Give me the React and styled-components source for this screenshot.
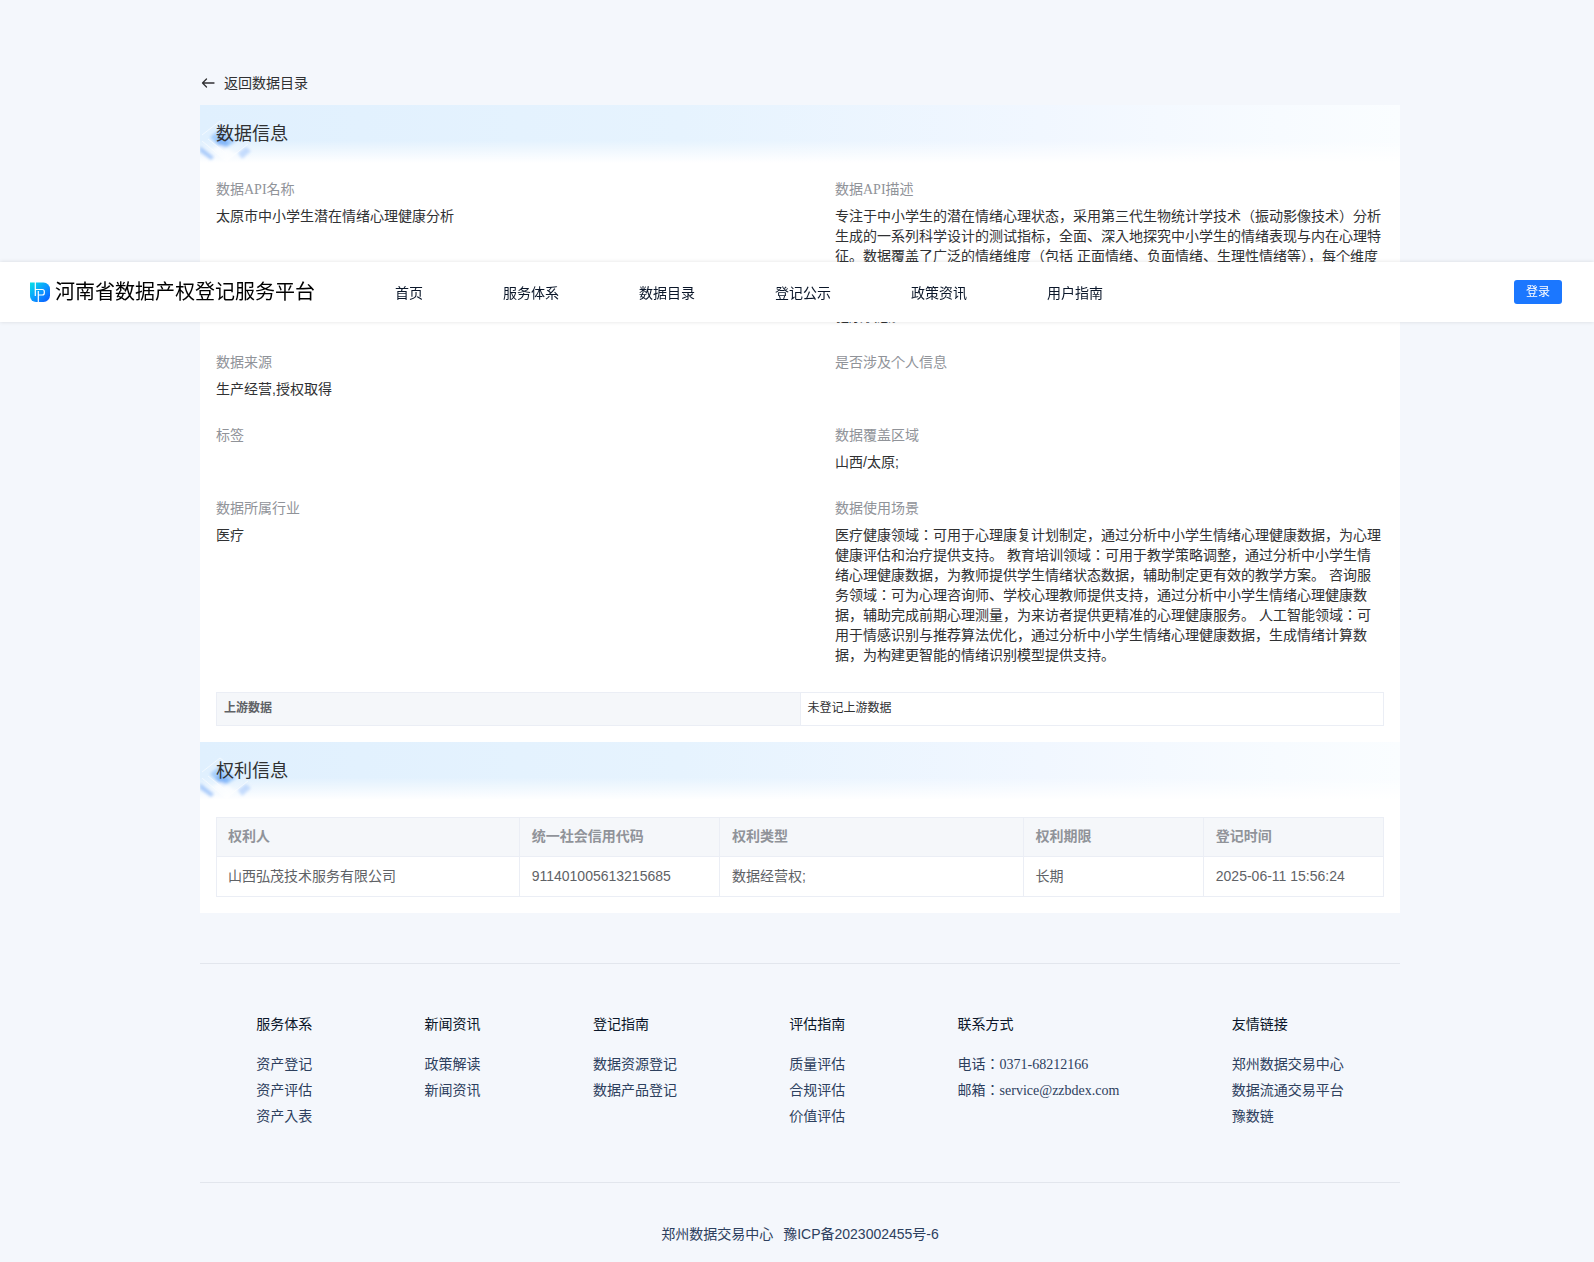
import { useState } from 'react';
import styled, { createGlobalStyle } from 'styled-components'

const sans = `'Liberation Sans', 'Noto Sans CJK JP', sans-serif`
const serif = `'Liberation Serif', 'Noto Sans CJK JP', serif`

const GlobalStyle = createGlobalStyle`
  * {
    box-sizing: border-box;
  }
  body {
    margin: 0;
    background-color: #f4f7fc;
    font-family: ${sans};
    font-size: 14px;
    line-height: 20px;
    color: #303133;
  }
  a {
    color: inherit;
    text-decoration: none;
  }
`;

const Header = styled.header`
  position: fixed;
  top: 262px;
  left: 0;
  right: 0;
  z-index: 10;
  display: flex;
  align-items: center;
  height: 60px;
  padding: 0 32px 0 30px;
  background-color: white;
  box-shadow: 0 0 4px rgba(0, 0, 0, 0.12);
`;

const Brand = styled.a`
  display: flex;
  align-items: center;
  gap: 5px;
  font-size: 20px;
  line-height: 30px;
  color: black;
  > svg {
    display: block;
    width: 20px;
    height: 20px;
  }
`;

const Nav = styled.nav`
  display: flex;
  flex: 1;
  gap: 80px;
  padding: 2px 0 0 80px;
  color: #0a1629;
`;

const LoginButton = styled.button`
  height: 24px;
  padding: 0 12px;
  border: none;
  border-radius: 3px;
  background-color: #1b77ff;
  color: white;
  font-family: ${sans};
  font-size: 12px;
  line-height: 24px;
  cursor: pointer;
`;

const Page = styled.div`
  padding: 73px 0 0 6px;
`;

const Container = styled.div`
  max-width: 1200px;
  margin: 0 auto;
`;

const BackLink = styled.a`
  display: inline-flex;
  align-items: center;
  gap: 8px;
  margin-bottom: 12px;
  vertical-align: top;
  > svg {
    width: 16px;
    height: 16px;
  }
`;

const Card = styled.section`
  background-color: white;
`;

const Banner = styled.div`
  position: relative;
  padding: 16px;
  background: linear-gradient(to bottom, rgba(255, 255, 255, 0) 60%, white 98%),
    linear-gradient(to right, #e0f0fe, #e6f3fe 40%, #f1f7ff 70%, #fafdff);
  > svg {
    position: absolute;
    left: 0;
    top: 0;
    width: 60px;
    height: 59px;
  }
  > h2 {
    position: relative;
    margin: 0;
    font-size: 18px;
    font-weight: normal;
    line-height: 27px;
  }
`;

const CardBody = styled.div`
  padding: 16px;
`;

const InfoGrid = styled.dl`
  display: grid;
  grid-template-columns: 1fr 1fr;
  gap: 27px 70px;
  margin: 0 0 27px;
  > div > dt {
    font-family: ${serif};
    color: #909399;
  }
  > div > dd {
    margin: 6px 0 0;
  }
`;

const UpstreamTable = styled.table`
  width: 100%;
  table-layout: fixed;
  border-collapse: collapse;
  font-size: 12px;
  line-height: 18px;
  th, td {
    padding: 6px 7px 8px;
    border: 1px solid #ebeef5;
    text-align: left;
  }
  th {
    background-color: #f5f7fa;
    color: #606266;
  }
`;

const RightsTable = styled.table`
  width: 100%;
  table-layout: fixed;
  border-collapse: separate;
  border-spacing: 0;
  line-height: 23px;
  th, td {
    padding: 8px 12px;
    border: 0 solid #ebeef5;
    border-width: 0 1px 1px 0;
    text-align: left;
    color: #606266;
  }
  th {
    padding-top: 7px;
    border-top-width: 1px;
    background-color: #f5f7fa;
    color: #909399;
  }
  th:first-child, td:first-child {
    padding-left: 11px;
    border-left-width: 1px;
  }
`;

const FooterLinks = styled.div`
  display: flex;
  justify-content: space-around;
  margin-top: 50px;
  padding: 51px 0 55px;
  border-top: 1px solid #e2e6ed;
  border-bottom: 1px solid #e2e6ed;
`;

const FooterColumn = styled.div`
  font-family: ${serif};
  color: #2d405e;
  > h3 {
    margin: 0 0 20px;
    font-size: 14px;
    font-weight: normal;
    color: #0a1629;
  }
  > ul {
    display: grid;
    gap: 6px;
    margin: 0;
    padding: 0;
    list-style: none;
  }
`;

const Copyright = styled.div`
  display: flex;
  justify-content: center;
  gap: 10px;
  padding: 41px 0 20px;
  color: #2d405e;
`;

const navItems = ['首页', '服务体系', '数据目录', '登记公示', '政策资讯', '用户指南']

const infoItems = [
  { label: '数据API名称', value: '太原市中小学生潜在情绪心理健康分析' },
  {
    label: '数据API描述',
    value: '专注于中小学生的潜在情绪心理状态，采用第三代生物统计学技术（振动影像技术）分析生成的一系列科学设计的测试指标，全面、深入地探究中小学生的情绪表现与内在心理特征。数据覆盖了广泛的情绪维度（包括 正面情绪、负面情绪、生理性情绪等），每个维度都通过精确的指标进行量化，能够客观反映中小学生当前的情绪状态与心理健康水平，为学校、家庭及专业机构及时了解学生心理变化、开展针对性的心理辅导与干预提供依据和健康状态。'
  },
  { label: '数据来源', value: '生产经营,授权取得' },
  { label: '是否涉及个人信息', value: '' },
  { label: '标签', value: '' },
  { label: '数据覆盖区域', value: '山西/太原;' },
  { label: '数据所属行业', value: '医疗' },
  {
    label: '数据使用场景',
    value: '医疗健康领域：可用于心理康复计划制定，通过分析中小学生情绪心理健康数据，为心理健康评估和治疗提供支持。 教育培训领域：可用于教学策略调整，通过分析中小学生情绪心理健康数据，为教师提供学生情绪状态数据，辅助制定更有效的教学方案。 咨询服务领域：可为心理咨询师、学校心理教师提供支持，通过分析中小学生情绪心理健康数据，辅助完成前期心理测量，为来访者提供更精准的心理健康服务。 人工智能领域：可用于情感识别与推荐算法优化，通过分析中小学生情绪心理健康数据，生成情绪计算数据，为构建更智能的情绪识别模型提供支持。'
  }
]

const rightsColumns = [
  { key: 'owner', title: '权利人', width: '26%' },
  { key: 'code', title: '统一社会信用代码', width: '200px' },
  { key: 'type', title: '权利类型', width: '26%' },
  { key: 'term', title: '权利期限', width: '180px' },
  { key: 'time', title: '登记时间', width: '180px' }
]

const rights = [
  {
    owner: '山西弘茂技术服务有限公司',
    code: '911401005613215685',
    type: '数据经营权;',
    term: '长期',
    time: '2025-06-11 15:56:24'
  }
]

const footerColumns = [
  { title: '服务体系', links: ['资产登记', '资产评估', '资产入表'] },
  { title: '新闻资讯', links: ['政策解读', '新闻资讯'] },
  { title: '登记指南', links: ['数据资源登记', '数据产品登记'] },
  { title: '评估指南', links: ['质量评估', '合规评估', '价值评估'] },
  { title: '联系方式', texts: ['电话：0371-68212166', '邮箱：service@zzbdex.com'] },
  { title: '友情链接', links: ['郑州数据交易中心', '数据流通交易平台', '豫数链'] }
]

function Logo () {
  return (
    <svg viewBox='0 0 20 20' aria-hidden='true'>
      <defs>
        <linearGradient id='logo' x1='0' y1='0' x2='1' y2='1'>
          <stop offset='0' stopColor='#06e3e6' />
          <stop offset='0.5' stopColor='#0b9bff' />
          <stop offset='1' stopColor='#0a55ff' />
        </linearGradient>
      </defs>
      <path fill='url(#logo)' d='M0 .5h13.5A6.5 6.5 0 0 1 20 7v6.500a6.500 6.500 0 0 1-6.500 6.500H6A6 6 0 0 1 0 14z' />
      <path fill='none' stroke='white' strokeWidth='1.200' d='M5.300 0v14M5.300 7.500h7a2 2 0 0 1 2 2v1.500a2 2 0 0 1-2 2H8.300V20M8.300 13V9' />
    </svg>
  )
}

// faded blue tiles in the corner of a section banner
function BannerArt () {
  return (
    <svg viewBox='0 0 60 59' aria-hidden='true'>
      <defs>
        <filter id='soft'><feGaussianBlur stdDeviation='1.500' /></filter>
      </defs>
      <g filter='url(#soft)'>
        <path fill='#8fc0fb' opacity='0.7' d='M10 32l10-8 16 12-13 9z' />
        <path fill='#5f9ff5' opacity='0.5' d='M15 36l6-4 9 6-7 4z' />
        <path fill='#a5c8fb' opacity='0.6' d='M38 48l8-6 5 4-9 8z' />
        <path fill='#8db9f8' opacity='0.7' d='M0 41l14 11-3 3L0 47z' />
        <path fill='white' opacity='0.7' d='M12 44l10-4 14 9-9 8z' />
      </g>
      <path fill='none' stroke='white' opacity='0.6' d='M2 30l18-14 16 12M2 36l24 20 22-17M8 34l20 16' />
    </svg>
  )
}

function SectionBanner ({ title }) {
  return (
    <Banner>
      <BannerArt />
      <h2>{title}</h2>
    </Banner>
  )
}

export function App () {

  const [isActive, setActive] = useState('数据目录')

  return (
    <>
    <GlobalStyle />
    <Header>
      <Brand href='#home'>
        <Logo />
        <span>河南省数据产权登记服务平台</span>
      </Brand>
      <Nav>
        {navItems.map((item) => (
          <a
          key={item}
          href={`#${item}`}
          aria-current={isActive === item ? 'page' : undefined}
          onClick={() => setActive(item)}>{item}</a>
        ))}
      </Nav>
      <LoginButton type='button'>登录</LoginButton>
    </Header>

    <Page>
      <Container>
        <BackLink href='#catalog'>
          <svg viewBox='0 0 16 16' fill='none' stroke='#303133' strokeWidth='1.300' strokeLinecap='round' strokeLinejoin='round' aria-hidden='true'>
            <path d='M14 8H2.500M6.500 4l-4 4 4 4' />
          </svg>
          返回数据目录
        </BackLink>

        <Card>
          <SectionBanner title='数据信息' />
          <CardBody>
            <InfoGrid>
              {infoItems.map(({ label, value }) => (
                <div key={label}>
                  <dt>{label}</dt>
                  <dd>{value}</dd>
                </div>
              ))}
            </InfoGrid>
            <UpstreamTable>
              <tbody>
                <tr>
                  <th scope='row'>上游数据</th>
                  <td>未登记上游数据</td>
                </tr>
              </tbody>
            </UpstreamTable>
          </CardBody>

          <SectionBanner title='权利信息' />
          <CardBody>
            <RightsTable>
              <colgroup>
                {rightsColumns.map(({ key, width }) => <col key={key} width={width} />)}
              </colgroup>
              <thead>
                <tr>
                  {rightsColumns.map(({ key, title }) => <th key={key} scope='col'>{title}</th>)}
                </tr>
              </thead>
              <tbody>
                {rights.map((row) => (
                  <tr key={row.code}>
                    {rightsColumns.map(({ key }) => <td key={key}>{row[key]}</td>)}
                  </tr>
                ))}
              </tbody>
            </RightsTable>
          </CardBody>
        </Card>

        <footer>
          <FooterLinks>
            {footerColumns.map(({ title, links, texts }) => (
              <FooterColumn key={title}>
                <h3>{title}</h3>
                <ul>
                  {links && links.map((link) => <li key={link}><a href={`#${link}`}>{link}</a></li>)}
                  {texts && texts.map((text) => <li key={text}>{text}</li>)}
                </ul>
              </FooterColumn>
            ))}
          </FooterLinks>
          <Copyright>
            <span>郑州数据交易中心</span>
            <a href='#icp'>豫ICP备2023002455号-6</a>
          </Copyright>
        </footer>
      </Container>
    </Page>
    </>
  )
}

export default App
